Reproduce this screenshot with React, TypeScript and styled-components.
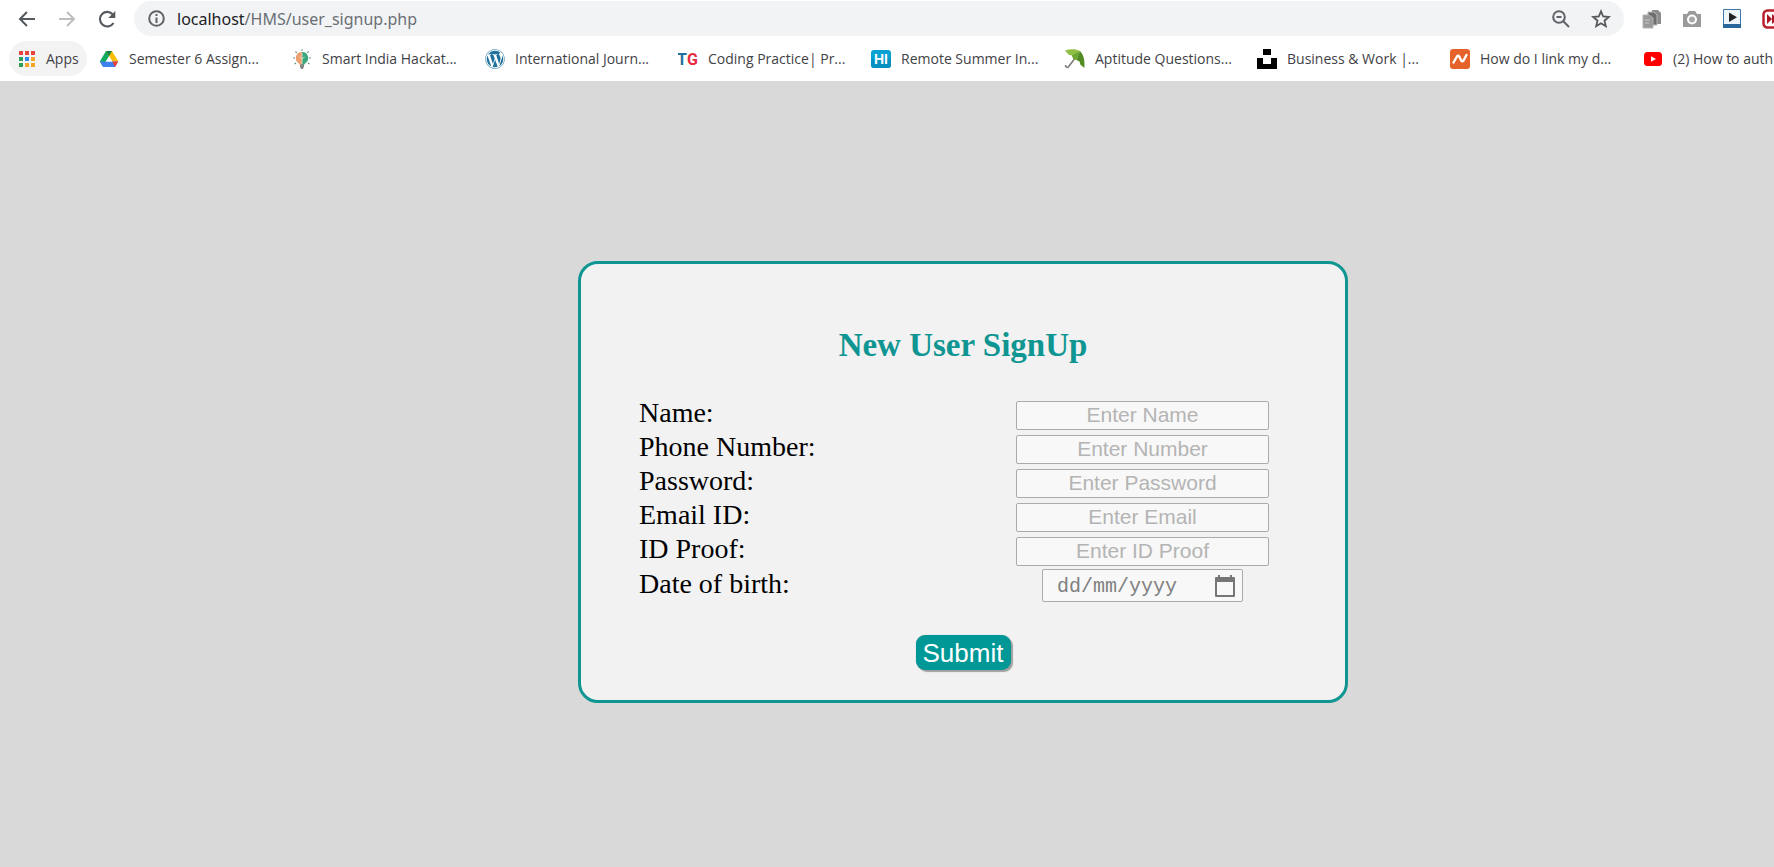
import React from "react";
import styled, { createGlobalStyle } from "styled-components";
import { FaWordpress } from "react-icons/fa";

const GlobalStyle = createGlobalStyle`
  * { box-sizing: border-box; }
  body { margin: 0; background: #d9d9d9; overflow-x: hidden; }
  button, input { font: inherit; margin: 0; }
`;

const Page = styled.div`
  display: flex;
  flex-direction: column;
  min-height: 100vh;
`;

const Browser = styled.header`
  background: #fff;
  height: 81px;
  overflow: hidden;
  font-family: "Noto Sans", "Open Sans", sans-serif;
  color: #3f4246;
`;

const Toolbar = styled.div`
  display: flex;
  align-items: center;
  height: 37px;
  padding-left: 16px;
`;

const IconButton = styled.button<{ $size?: number }>`
  display: flex;
  flex: none;
  align-items: center;
  justify-content: center;
  width: ${(p) => p.$size ?? 40}px;
  height: 36px;
  padding: 0;
  border: 0;
  background: none;
`;

const NavButtons = styled.nav`
  display: flex;
  width: 118px;
  margin-left: -9px;
  margin-right: 9px;
`;

const AddressBar = styled.div`
  display: flex;
  flex: 1;
  align-items: center;
  height: 35px;
  padding: 0 3px 0 14px;
  border-radius: 18px;
  background: #f1f3f4;
`;

const Url = styled.div`
  flex: 1;
  padding-left: 12px;
  font-size: 16px;
  line-height: 34px;
  color: #6b6f74;
  span { color: #202124; }
`;

const Extensions = styled.div`
  display: flex;
  flex: none;
  width: 150px;
  padding-left: 8px;
  overflow: hidden;
`;

const Bookmarks = styled.nav`
  display: flex;
  align-items: center;
  height: 43px;
  padding-left: 9px;
`;

const Bookmark = styled.a`
  display: flex;
  flex: none;
  align-items: center;
  gap: 10px;
  width: 193px;
  color: inherit;
  font-family: "Open Sans", "Noto Sans", sans-serif;
  font-size: 14px;
  line-height: 20px;
  white-space: nowrap;
  text-decoration: none;
  svg { flex: none; }
`;

const AppsLink = styled(Bookmark)`
  width: 78px;
  height: 35px;
  margin-right: 12px;
  padding-left: 9px;
  border-radius: 18px;
  background: #f3f3f4;
`;

const Main = styled.main`
  display: flex;
  flex: 1;
  align-items: center;
  justify-content: center;
  padding: 16px 0 0 152px;
  font-family: "Liberation Serif", "Times New Roman", serif;
`;

const Card = styled.form`
  display: flex;
  flex-direction: column;
  align-items: center;
  width: 770px;
  max-width: 100%;
  padding: 62px 58px 30px;
  border: 3px solid #0f9592;
  border-radius: 20px;
  background: #f2f2f2;
`;

const Title = styled.h1`
  margin: 0 0 32px;
  color: #0f9592;
  font-size: 33px;
  line-height: 38px;
`;

const Fields = styled.div`
  align-self: stretch;
`;

const Row = styled.div`
  display: grid;
  grid-template-columns: 1fr 289px;
  align-items: end;
  justify-items: center;
  min-height: 34px;
`;

const Label = styled.label`
  align-self: center;
  justify-self: start;
  color: #000;
  font-size: 28px;
  line-height: 34px;
`;

const TextInput = styled.input`
  width: 253px;
  height: 29px;
  padding: 0 2px 2px;
  border: 1px solid #ababab;
  border-radius: 2px;
  background: #f8f8f8;
  font-family: "Liberation Sans", Arial, sans-serif;
  font-size: 21px;
  text-align: center;
  &::placeholder { color: #b4b4b4; opacity: 1; }
`;

const DateBox = styled.div`
  display: flex;
  align-items: center;
  justify-content: space-between;
  width: 201px;
  height: 33px;
  margin-top: 3px;
  padding: 0 6px 0 14px;
  border: 1px solid #ababab;
  border-radius: 2px;
  background: #f8f8f8;
`;

const DateInput = styled.input`
  width: 130px;
  padding: 2px 0 0;
  border: 0;
  background: none;
  font-family: "Liberation Mono", monospace;
  font-size: 20px;
  &::placeholder { color: #808080; opacity: 1; }
`;

const PickerButton = styled(IconButton)`
  height: 24px;
`;

const Submit = styled.button`
  width: 95px;
  height: 35px;
  margin-top: 33px;
  padding: 0;
  border: 0;
  border-radius: 9px;
  background: #009896;
  box-shadow: 2px 2px 1px #a0a0a0, 0 0 1px #a0a0a0;
  color: #fff;
  font-family: "Liberation Sans", Arial, sans-serif;
  font-size: 26px;
  line-height: 34px;
`;

const stroke = { fill: "none", stroke: "#5f6368", strokeWidth: 2 };

const BackIcon = ({ color = "#55595d", flip = false }) => (
  <svg width="18" height="18" viewBox="0 0 18 18" fill="none" stroke={color} strokeWidth="2">
    <path d={flip ? "M1 9h15M9 2l7 7-7 7" : "M17 9H2M9 2L2 9l7 7"} />
  </svg>
);

const ReloadIcon = () => (
  <svg width="19" height="18" viewBox="0 0 19 18">
    <path d="M15.5 13A7.3 7.3 0 1 1 15 4.6" fill="none" stroke="#55595d" strokeWidth="2.1" />
    <path d="M17.3 1v7h-7z" fill="#55595d" />
  </svg>
);

const InfoIcon = () => (
  <svg width="17" height="17" viewBox="0 0 17 17">
    <circle cx="8.5" cy="8.5" r="7.3" {...stroke} />
    <path d="M8.5 4v2M8.5 7.5V13" {...stroke} />
  </svg>
);

const ZoomOutIcon = () => (
  <svg width="18" height="18" viewBox="0 0 18 18">
    <circle cx="7" cy="7" r="5.8" {...stroke} />
    <path d="M11.3 11.3L17 17M4.5 7h5" {...stroke} />
  </svg>
);

const StarIcon = () => (
  <svg width="20" height="19" viewBox="0 0 20 19">
    <path d="M10 2.3l2.2 5.2 5.6.5-4.3 3.7 1.3 5.5-4.8-2.9-4.8 2.9 1.3-5.5L2.2 8l5.600-.5z" fill="none" stroke="#55595d" strokeWidth="1.8" />
  </svg>
);

const PagesIcon = () => (
  <svg width="20" height="20" viewBox="0 0 20 20">
    <path d="M10 1h6l3 3v11h-9z" fill="#8c8c8c" />
    <path d="M6 3h6l3 3v10H6z" fill="#6f6f6f" stroke="#b5b5b5" />
    <path d="M1 6h6l4 3v10H1z" fill="#999" stroke="#b5b5b5" />
    <path d="M3 11h5M3 14h4" stroke="#c8c8c8" fill="none" />
  </svg>
);

const CameraIcon = () => (
  <svg width="20" height="18" viewBox="0 0 20 18">
    <path d="M1 4h4l2-3h6l2 3h4v13H1z" fill="#9a9a9a" />
    <circle cx="10" cy="9.500" r="4" fill="#aaa" stroke="#fff" strokeWidth="2" />
  </svg>
);

const PlayBoxIcon = () => (
  <svg width="18" height="19" viewBox="0 0 18 19">
    <path d="M.5.5h17v18H.5z" fill="#eef6fb" stroke="#3f78a8" />
    <path d="M0 15h18v4H0z" fill="#2a679c" />
    <path d="M6 3.500l8 4.700-8 4.700z" fill="#222" />
  </svg>
);

const ForwardIcon = () => (
  <svg width="20" height="20" viewBox="0 0 20 20">
    <rect x="1.500" y="1.500" width="17" height="17" rx="4" fill="#fff" stroke="#b9202e" strokeWidth="2.500" />
    <path d="M5 5l5 5-5 5zM10 5l6 5-6 5z" fill="#a91524" />
  </svg>
);

const AppsIcon = () => {
  const colors = ["#e8453c", "#e8453c", "#e8453c", "#2f9e57", "#2d8ceb", "#f3a52c", "#2f9e57", "#f3a52c", "#f3a52c"];
  return (
    <svg width="18" height="18" viewBox="0 0 18 18">
      {colors.map((c, i) => (
        <rect key={i} x={1 + (i % 3) * 6} y={1 + Math.floor(i / 3) * 6} width="4" height="4" fill={c} />
      ))}
    </svg>
  );
};

const DriveIcon = () => (
  <svg width="20" height="20" viewBox="0 0 20 20">
    <path d="M7 2h6l-3 5.200L4 17.600.8 12.500z" fill="#11a861" />
    <path d="M7 2h6l6.400 10.500h-6z" fill="#fbbc04" />
    <path d="M.9 12.500h18.400L16 18H4z" fill="#3f7ff0" />
    <path d="M7 2h6l-3 5z" fill="#128142" />
    <path d="M10 7.500l3.200 5H6.800z" fill="#fff" />
    <path d="M13.300 12.500h6L16 18z" fill="#ea4335" />
  </svg>
);

const BulbIcon = () => (
  <svg width="20" height="20" viewBox="0 0 20 20">
    <path d="M10 3a6 6 0 0 0-3.500 11L8 16h2z" fill="#ee9d6e" />
    <path d="M10 3a6 6 0 0 1 3.500 11L12 16h-2z" fill="#39a97b" />
    <path d="M8 15.500h4v2L11 20H9l-1-2.500z" fill="#858585" />
    <path d="M10 4v11M7.500 8l2.500 2 2.500-2" stroke="#e8e4d3" strokeWidth=".8" fill="none" />
    <path d="M10 .3v1.500M3.500 2.500l1.300 1.300M16.500 2.500l-1.300 1.300M1 9h2M17 9h2M2.500 15l1.500-1M17.500 15L16 14" stroke="#5d9486" strokeWidth="1.200" />
  </svg>
);

const TgIcon = () => (
  <svg width="20" height="20" viewBox="0 0 20 20" fontFamily="Roboto, sans-serif" fontWeight="700" fontSize="16">
    <text x="-1" y="16" fill="#21739c">T</text>
    <text x="9" y="16" fill="#e62a40">G</text>
  </svg>
);

const HiIcon = () => (
  <svg width="20" height="20" viewBox="0 0 20 20">
    <rect y="1" width="20" height="18" rx="3" fill="#09a0d2" />
    <path d="M0 10h20v6a3 3 0 0 1-3 3H3a3 3 0 0 1-3-3z" fill="#0890c0" />
    <text x="10" y="15" textAnchor="middle" fill="#fff" fontFamily="'Liberation Sans', sans-serif" fontWeight="700" fontSize="14">HI</text>
  </svg>
);

const UmbrellaIcon = () => (
  <svg width="21" height="20" viewBox="0 0 21 20">
    <path d="M15 4L4.500 17.800c-1 1.200-3.300.4-3-1.800" fill="none" stroke="#777" strokeWidth="1.500" />
    <path d="M1 1.500C6-.5 12-.3 16 2l-3.500 9-3.300-1.300-1.200-3.200-3-.5z" fill="#8fc045" />
    <path d="M16 2c4 4.500 5 10 4.300 17l-4-3.500-.8-3-3-1.500z" fill="#528a24" />
    <path d="M16 2L8 6.500l1.200 3.200 3.300 1.300z" fill="#6da633" />
  </svg>
);

const UnsplashIcon = () => (
  <svg width="20" height="20" viewBox="0 0 20 20">
    <path d="M6 0h8v6H6zM0 9h6v6h8V9h6v11H0z" />
  </svg>
);

const NamecheapIcon = () => (
  <svg width="20" height="20" viewBox="0 0 20 20">
    <rect width="20" height="20" rx="3" fill="#e5622b" />
    <path d="M3.500 13.500L7 7.500q1-1.500 2.200 0l2 4q1.200 1.800 2.300 0l3-5.500" fill="none" stroke="#fff" strokeWidth="2.400" strokeLinejoin="round" strokeLinecap="round" />
  </svg>
);

const YoutubeIcon = () => (
  <svg width="20" height="20" viewBox="0 0 20 20">
    <rect x="1" y="3" width="18" height="14" rx="3.500" fill="#f00" />
    <path d="M8 7.300l5 2.700-5 2.700z" fill="#fff" />
  </svg>
);

const CalendarIcon = () => (
  <svg width="20" height="22" viewBox="0 0 20 22">
    <path d="M1 3h18v18H1z" fill="none" stroke="#767676" strokeWidth="2" strokeLinejoin="round" />
    <path d="M1 2h18v5H1zM3 0h2v3H3zM15 0h2v3h-2z" fill="#767676" />
  </svg>
);

const bookmarks = [
  { icon: <DriveIcon />, title: "Semester 6 Assign..." },
  { icon: <BulbIcon />, title: "Smart India Hackat..." },
  { icon: <FaWordpress size={20} color="#21709b" />, title: "International Journ..." },
  { icon: <TgIcon />, title: "Coding Practice| Pr..." },
  { icon: <HiIcon />, title: "Remote Summer In..." },
  { icon: <UmbrellaIcon />, title: "Aptitude Questions..." },
  { icon: <UnsplashIcon />, title: "Business & Work |..." },
  { icon: <NamecheapIcon />, title: "How do I link my d..." },
  { icon: <YoutubeIcon />, title: "(2) How to auth" },
];

const fields = [
  { id: "name", label: "Name:", hint: "Enter Name", type: "text" },
  { id: "phone", label: "Phone Number:", hint: "Enter Number", type: "tel" },
  { id: "password", label: "Password:", hint: "Enter Password", type: "password" },
  { id: "email", label: "Email ID:", hint: "Enter Email", type: "email" },
  { id: "proof", label: "ID Proof:", hint: "Enter ID Proof", type: "text" },
];

export default function App() {
  return (
    <Page>
      <GlobalStyle />
      <Browser>
        <Toolbar>
          <NavButtons>
            <IconButton aria-label="Back"><BackIcon /></IconButton>
            <IconButton aria-label="Forward"><BackIcon color="#bcbec0" flip /></IconButton>
            <IconButton aria-label="Reload"><ReloadIcon /></IconButton>
          </NavButtons>
          <AddressBar>
            <InfoIcon />
            <Url><span>localhost</span>/HMS/user_signup.php</Url>
            <IconButton aria-label="Zoom"><ZoomOutIcon /></IconButton>
            <IconButton aria-label="Bookmark this page"><StarIcon /></IconButton>
          </AddressBar>
          <Extensions>
            <IconButton aria-label="Copy pages"><PagesIcon /></IconButton>
            <IconButton aria-label="Take screenshot"><CameraIcon /></IconButton>
            <IconButton aria-label="Play video"><PlayBoxIcon /></IconButton>
            <IconButton aria-label="Skip ahead"><ForwardIcon /></IconButton>
          </Extensions>
        </Toolbar>
        <Bookmarks>
          <AppsLink href="#apps"><AppsIcon />Apps</AppsLink>
          {bookmarks.map((b) => (
            <Bookmark key={b.title} href="#bookmark">{b.icon}{b.title}</Bookmark>
          ))}
        </Bookmarks>
      </Browser>
      <Main>
        <Card onSubmit={(e: React.FormEvent) => e.preventDefault()}>
          <Title>New User SignUp</Title>
          <Fields>
            {fields.map((f) => (
              <Row key={f.id}>
                <Label htmlFor={f.id}>{f.label}</Label>
                <TextInput id={f.id} type={f.type} placeholder={f.hint} />
              </Row>
            ))}
            <Row>
              <Label htmlFor="dob">Date of birth:</Label>
              <DateBox>
                <DateInput id="dob" type="text" inputMode="numeric" placeholder="dd/mm/yyyy" />
                <PickerButton type="button" $size={22} aria-label="Choose date"><CalendarIcon /></PickerButton>
              </DateBox>
            </Row>
          </Fields>
          <Submit type="submit">Submit</Submit>
        </Card>
      </Main>
    </Page>
  );
}
